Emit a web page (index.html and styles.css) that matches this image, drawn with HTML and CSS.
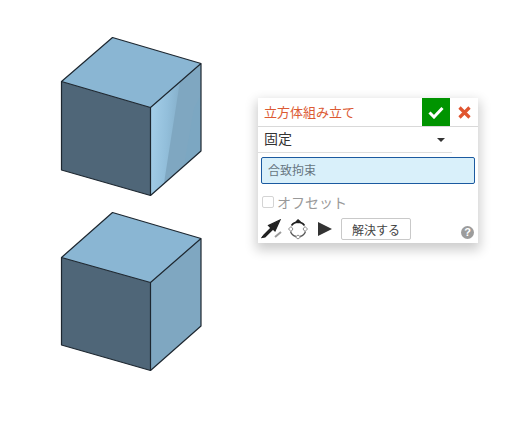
FILE: index.html
```html
<!DOCTYPE html>
<html lang="ja">
<head>
<meta charset="utf-8">
<title>立方体組み立て</title>
<link rel="stylesheet" href="styles.css">
</head>
<body>
<svg class="canvas" width="505" height="421" viewBox="0 0 505 421">
  <defs>
    <linearGradient id="sheen" x1="0" y1="0" x2="1" y2="0.2">
      <stop offset="0" stop-color="#a6d0ea"/>
      <stop offset="0.6" stop-color="#93bfdb"/>
      <stop offset="1" stop-color="#85afca"/>
    </linearGradient>
  </defs>
  <g class="cube">
    <path class="top" d="M61.5 81.5L112.5 37.5L201 63.5L150.5 107.5Z"/>
    <path class="left" d="M61.5 81.5L150.5 107.5V195.5L61.5 170Z"/>
    <path class="right" d="M150.5 107.5L201 63.5V151L150.5 195.5Z"/>
    <path fill="url(#sheen)" d="M150.5 107.5L180 81L164 183L150.5 195.5Z"/>
    <path fill="#7ca7c2" d="M194 108L201 95V151L184 166Z"/>
    <path class="edges" d="M61.5 81.5L112.5 37.5L201 63.5L150.5 107.5ZM61.5 81.5V170L150.5 195.5L201 151V63.5M150.5 107.5V195.5"/>
  </g>
  <g class="cube">
    <path class="top" d="M61.5 257.5L112.5 212.5L201 238.5L150.5 282.5Z"/>
    <path class="left" d="M61.5 257.5L150.5 282.5V370.5L61.5 345Z"/>
    <path class="right" d="M150.5 282.5L201 238.5V326L150.5 370.5Z"/>
    <path class="edges" d="M61.5 257.5L112.5 212.5L201 238.5L150.5 282.5ZM61.5 257.5V345L150.5 370.5L201 326V238.5M150.5 282.5V370.5"/>
  </g>
</svg>

<section class="panel">
  <header class="panel-head">
    <h1 class="panel-title">立方体組み立て</h1>
    <button class="ok" type="button" aria-label="OK">
      <svg width="16" height="13" viewBox="0 0 16 13"><path d="M1.5 6.5L6 11L14.5 2" fill="none" stroke="#fff" stroke-width="3"/></svg>
    </button>
    <button class="cancel" type="button" aria-label="閉じる">
      <svg width="13" height="13" viewBox="0 0 13 13"><path d="M1.5 1.5L11.5 11.5M11.5 1.5L1.5 11.5" fill="none" stroke="#e0552f" stroke-width="3.2"/></svg>
    </button>
  </header>
  <div class="select-row">
    <span>固定</span>
    <span class="caret"></span>
  </div>
  <div class="selection">合致拘束</div>
  <label class="check-row">
    <span class="check"></span>
    <span>オフセット</span>
  </label>
  <div class="tools">
    <svg class="tool-flip" width="22" height="20" viewBox="0 0 22 20">
      <path d="M1 18.5L3 16L10 9L7.5 6.5L19 1L14 12L12 10L4 18Z" fill="#222" stroke="#222" stroke-width="1.2"/>
      <path d="M14 18L20 13" stroke="#9a9a9a" stroke-width="2"/>
    </svg>
    <svg class="tool-rotate" width="22" height="22" viewBox="0 0 22 22">
      <path d="M4.5 7.5A8 8 0 0 1 17.5 7.5" fill="none" stroke="#222" stroke-width="1.6"/>
      <path d="M3.5 13.5A8 8 0 0 0 9 18.5M13 18.5A8 8 0 0 0 18.5 13.5" fill="none" stroke="#555" stroke-width="1.3"/>
      <path d="M11 1L14 3.5L11 5.5L8.5 3.5Z" fill="#222"/>
      <path d="M1.5 11L4 8.5L6 11L4 13.5Z" fill="#fff" stroke="#8a8a8a"/>
      <path d="M18 8.5L20.5 11L18 13.5L16 11Z" fill="#fff" stroke="#8a8a8a"/>
      <path d="M11 17L13.5 19L11 21L8.5 19Z" fill="#fff" stroke="#8a8a8a"/>
    </svg>
    <svg class="tool-play" width="14" height="14" viewBox="0 0 14 14"><path d="M0 0L14 7L0 14Z" fill="#333"/></svg>
    <button class="solve" type="button">解決する</button>
    <svg class="help" width="13" height="13" viewBox="0 0 13 13">
      <circle cx="6.5" cy="6.5" r="6.5" fill="#9c9c9c"/>
      <text x="6.5" y="10.4" text-anchor="middle" class="help-mark">?</text>
    </svg>
  </div>
</section>
</body>
</html>
```
FILE: styles.css
```css
* { box-sizing: border-box; }
html, body { margin: 0; padding: 0; }
body {
  position: relative;
  width: 505px;
  height: 421px;
  overflow: hidden;
  background: #fff;
  font-family: "Noto Sans CJK JP", "Noto Sans", sans-serif;
}
.canvas { position: absolute; left: 0; top: 0; display: block; }
.top { fill: #8ab6d3; }
.left { fill: #4f6678; }
.right { fill: #7fa7c1; }
.edges { fill: none; stroke: #1d2730; stroke-width: 1.2; stroke-linejoin: round; }

.panel {
  position: absolute;
  left: 258px;
  top: 98px;
  width: 220px;
  height: 145px;
  background: #fff;
  box-shadow: 0 5px 11px 2px rgba(0, 0, 0, 0.2);
  display: flex;
  flex-direction: column;
}
.panel-head {
  display: flex;
  align-items: center;
  height: 29px;
  border-bottom: 1px solid #d9d9d9;
  flex: none;
}
.panel-title {
  flex: 1;
  margin: 0;
  padding: 0 0 0 6px;
  font-size: 13px;
  font-weight: 400;
  line-height: 28px;
  color: #dc5a33;
}
.ok, .cancel { border: 0; padding: 0; display: flex; align-items: center; justify-content: center; }
.ok { width: 28px; height: 28px; background: #009400; }
.cancel { width: 28px; height: 28px; background: transparent; }

.select-row {
  display: flex;
  align-items: center;
  justify-content: space-between;
  width: 194px;
  height: 26px;
  padding: 0 6px 3px;
  border-bottom: 1px solid #dedede;
  font-size: 14px;
  color: #333;
  flex: none;
}
.caret {
  width: 0;
  height: 0;
  margin-right: 1px;
  margin-top: 3px;
  border-left: 4px solid transparent;
  border-right: 4px solid transparent;
  border-top: 4px solid #333;
}
.selection {
  margin: 4px 3px 0;
  height: 27px;
  padding-left: 6px;
  border: 1px solid #1b5aa0;
  border-radius: 2px;
  background: #d9f0fa;
  font-size: 12px;
  line-height: 24px;
  color: #667580;
  flex: none;
}
.check-row {
  display: flex;
  align-items: center;
  gap: 3px;
  margin: 10px 0 0 4px;
  height: 16px;
  font-size: 14px;
  color: #999;
  flex: none;
}
.check {
  width: 12px;
  height: 12px;
  border: 1px solid #d4d4d4;
  border-radius: 2px;
}
.tools {
  display: flex;
  align-items: center;
  margin: 6px 0 0 3px;
  height: 26px;
  flex: none;
}
.tool-rotate { margin-left: 4px; }
.tool-play { margin-left: 9px; }
.solve {
  margin-left: 9px;
  width: 70px;
  height: 22px;
  padding: 0;
  background: #fff;
  border: 1px solid #c9c9c9;
  border-radius: 2px;
  font-family: inherit;
  font-size: 12px;
  color: #444;
}
.help { margin-left: auto; margin-right: 4px; margin-top: 7px; }
.help-mark { font-family: "Liberation Sans", sans-serif; font-size: 11px; font-weight: 700; fill: #fff; }
```
